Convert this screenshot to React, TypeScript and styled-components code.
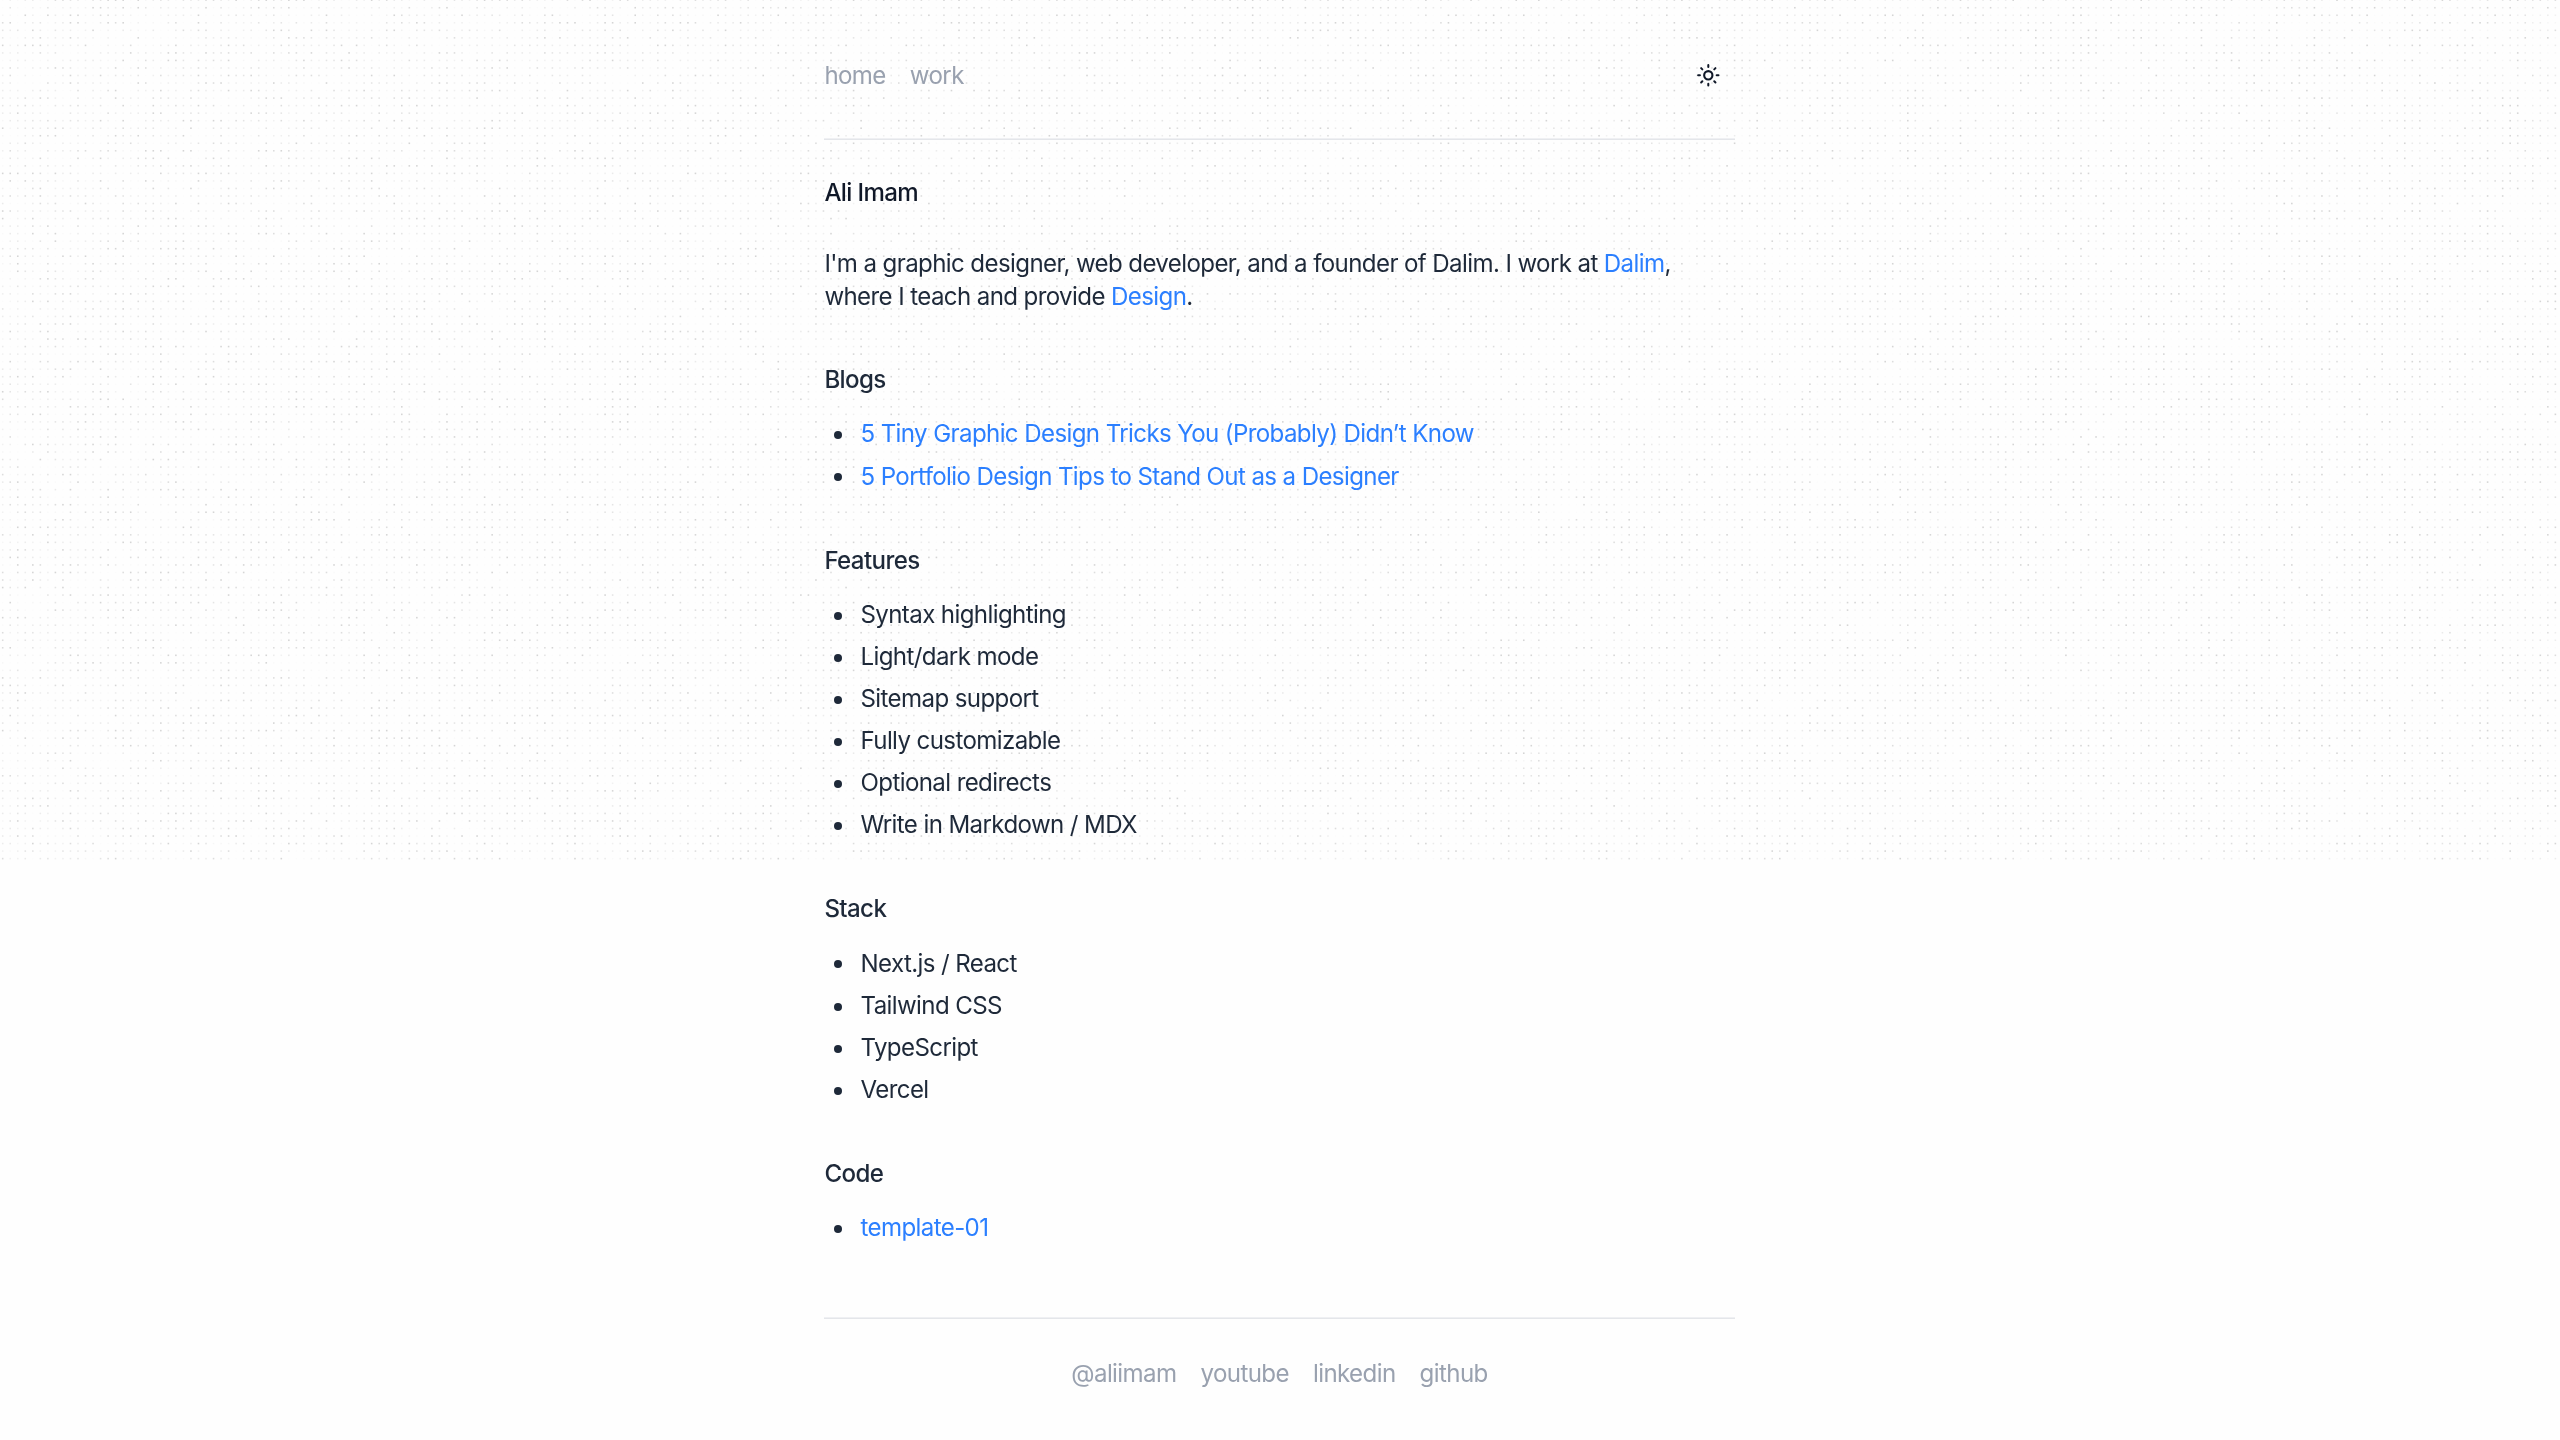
import React, { useEffect, useRef } from "react";
import styled, { createGlobalStyle } from "styled-components";

const GlobalStyle = createGlobalStyle`
  *, *::before, *::after { box-sizing: border-box; }
  body {
    margin: 0;
    background: #fefefe;
    color: #1e2939;
    font-family: Inter, "Liberation Sans", sans-serif;
    font-size: 24.1px;
    line-height: 33.13px;
    letter-spacing: -0.618px;
    -webkit-font-smoothing: antialiased;
    overflow: hidden;
  }
`;

const Page = styled.div`
  position: relative;
  min-height: 1440px;
  padding-right: 1px;
  display: flex;
  justify-content: center;
`;

const DotCanvas = styled.canvas`
  position: absolute;
  inset: 0 auto auto 0;
`;

const Column = styled.div`
  position: relative;
  width: 911px;
  padding-top: 58.8px;
  display: flex;
  flex-direction: column;
`;

const Header = styled.header`
  display: flex;
  justify-content: space-between;
  align-items: center;
  height: 33px;
  padding: 0 15.2px 0 0.4px;
`;

const Links = styled.nav<{ $centered?: boolean }>`
  display: flex;
  gap: 24.1px;
  justify-content: ${(p) => (p.$centered ? "center" : "flex-start")};
`;

const MutedLink = styled.a`
  color: #99a1af;
  text-decoration: none;
`;

const ThemeButton = styled.button`
  display: flex;
  padding: 0;
  border: 0;
  background: none;
  color: #101828;
`;

const Rule = styled.hr<{ $before: number; $after: number }>`
  width: 100%;
  height: 2px;
  margin: ${(p) => p.$before}px 0 ${(p) => p.$after}px;
  border: 0;
  border-top: 1px solid #eff0f3;
  border-bottom: 1px solid #e4e6ea;
`;

const Main = styled.main`
  padding-left: 0.4px;
`;

const Title = styled.h1`
  margin: 0 0 38.2px;
  font-size: inherit;
  font-weight: 500;
  color: #101828;
`;

const Intro = styled.p`
  margin: 0;
`;

const Link = styled.a`
  color: #2b7fff;
  text-decoration: none;
`;

const Section = styled.section`
  margin-top: 50px;

  & + & {
    margin-top: 50.8px;
  }
`;

const SectionTitle = styled.h2`
  margin: 0 0 21.07px;
  font-size: inherit;
  font-weight: 500;
`;

const List = styled.ul`
  display: flex;
  flex-direction: column;
  gap: 9.04px;
  margin: 0;
  padding: 0;
  list-style: none;
`;

const Item = styled.li`
  display: flex;

  &::before {
    content: "";
    flex: none;
    width: 8px;
    height: 8px;
    margin: 13.9px 18.8px 0 9.3px;
    border-radius: 50%;
    background: currentColor;
  }
`;

const PITCH = 7.53;
const ROWS = 115;
const SHADES = [0.01, 0.02, 0.03, 0.05, 0.06, 0.07, 0.08, 0.1, 0.13, 0.16];

function Dots() {
  const ref = useRef<HTMLCanvasElement>(null);
  useEffect(() => {
    const ctx = ref.current?.getContext("2d");
    if (!ctx) return;
    let seed = 20177;
    const next = () => {
      seed = (Math.imul(seed, 1664525) + 1013904223) >>> 0;
      return seed / 4294967296;
    };
    ctx.clearRect(0, 0, 2560, 864);
    for (let row = 0; row < ROWS; row++) {
      for (let x = 1.9; x < 2560; x += PITCH) {
        const alpha = SHADES[Math.floor(next() * SHADES.length)];
        ctx.fillStyle = `rgba(0, 0, 0, ${alpha})`;
        ctx.fillRect(x, row * PITCH - 0.6, 1.6, 1.6);
      }
    }
  }, []);
  return <DotCanvas ref={ref} width={2560} height={864} />;
}

function SunIcon() {
  return (
    <svg width="22.6" height="22.6" viewBox="0 0 15 15" fill="none" stroke="currentColor" strokeLinecap="round">
      <circle cx="7.5" cy="7.5" r="2.75" strokeWidth="1.4" />
      <path
        strokeWidth="1.35"
        d="M7.5 .75v1.2M7.5 13.05v1.2M.75 7.5h1.2M13.05 7.5h1.2M2.75 2.75l.8.8M11.45 11.45l.8.8M2.75 12.25l.8-.8M11.45 3.55l.8-.8"
      />
    </svg>
  );
}

type Entry = { label: string; linked?: boolean };

const sections: { title: string; items: Entry[] }[] = [
  {
    title: "Blogs",
    items: [
      { label: "5 Tiny Graphic Design Tricks You (Probably) Didn’t Know", linked: true },
      { label: "5 Portfolio Design Tips to Stand Out as a Designer", linked: true },
    ],
  },
  {
    title: "Features",
    items: [
      { label: "Syntax highlighting" },
      { label: "Light/dark mode" },
      { label: "Sitemap support" },
      { label: "Fully customizable" },
      { label: "Optional redirects" },
      { label: "Write in Markdown / MDX" },
    ],
  },
  {
    title: "Stack",
    items: [{ label: "Next.js / React" }, { label: "Tailwind CSS" }, { label: "TypeScript" }, { label: "Vercel" }],
  },
  { title: "Code", items: [{ label: "template-01", linked: true }] },
];

export default function App() {
  return (
    <>
      <GlobalStyle />
      <Page>
        <Dots />
        <Column>
          <Header>
            <Links>
              <MutedLink>home</MutedLink>
              <MutedLink>work</MutedLink>
            </Links>
            <ThemeButton aria-label="Toggle theme">
              <SunIcon />
            </ThemeButton>
          </Header>
          <Rule $before={46.2} $after={35.7} />
          <Main>
            <Title>Ali Imam</Title>
            <Intro>
              I'm a graphic designer, web developer, and a founder of Dalim. I work at <Link>Dalim</Link>, where I
              teach and provide <Link>Design</Link>.
            </Intro>
            {sections.map((section) => (
              <Section key={section.title}>
                <SectionTitle>{section.title}</SectionTitle>
                <List>
                  {section.items.map((item) => (
                    <Item key={item.label}>{item.linked ? <Link>{item.label}</Link> : item.label}</Item>
                  ))}
                </List>
              </Section>
            ))}
          </Main>
          <Rule $before={72.5} $after={38.2} />
          <Links as="footer" $centered>
            <MutedLink>@aliimam</MutedLink>
            <MutedLink>youtube</MutedLink>
            <MutedLink>linkedin</MutedLink>
            <MutedLink>github</MutedLink>
          </Links>
        </Column>
      </Page>
    </>
  );
}
